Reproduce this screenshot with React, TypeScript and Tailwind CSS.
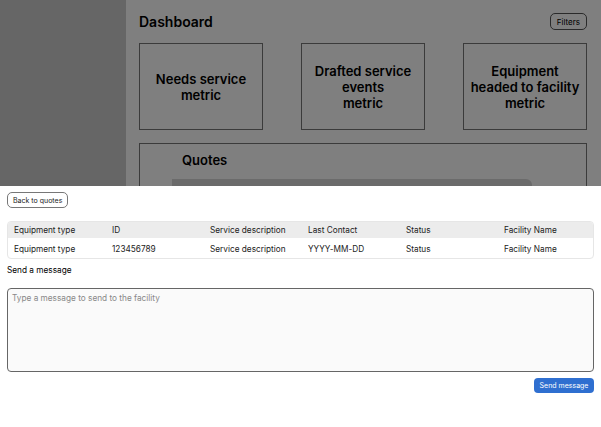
import React from 'react'

const cols = ['Equipment type', 'ID', 'Service description', 'Last Contact', 'Status', 'Facility Name']
const row = ['Equipment type', '123456789', 'Service description', 'YYYY-MM-DD', 'Status', 'Facility Name']

function Metric({ lines }: { lines: string[] }) {
  return (
    <div className="w-[124px] h-[87px] border border-[#777] flex flex-col items-center justify-center text-[13px] leading-[16px] font-semibold text-center text-black">
      {lines.map(l => <div key={l}>{l}</div>)}
    </div>
  )
}

export default function App() {
  return (
    <div className="relative w-[601px] h-[427px] overflow-hidden bg-white" style={{ fontFamily: 'Inter, "Noto Sans", sans-serif' }}>
      {/* dashboard behind */}
      <div className="flex h-full">
        <div className="w-[126px] bg-[#cccccc]" />
        <div className="flex-1 pl-[13px] pr-[14px] pt-[13px]">
          <div className="flex items-center justify-between h-[17px]">
            <div className="text-[14px] font-semibold text-black">Dashboard</div>
            <button className="h-[17px] px-[6px] border border-[#555] rounded-[5px] text-[8px] text-black">Filters</button>
          </div>
          <div className="flex justify-between mt-[13px]">
            <Metric lines={['Needs service', 'metric']} />
            <Metric lines={['Drafted service', 'events', 'metric']} />
            <Metric lines={['Equipment', 'headed to facility', 'metric']} />
          </div>
          <div className="mt-[13px] border border-[#777] h-[200px] pl-[32px] pt-[8px]">
            <div className="pl-[10px] text-[13px] font-semibold text-black leading-[16px]">Quotes</div>
            <div className="mt-[11px] w-[360px] h-[60px] bg-[#d6d6d6] rounded-tr-[6px]" />
          </div>
        </div>
      </div>
      <div className="absolute inset-0 bg-black/50" />

      {/* bottom sheet */}
      <div className="absolute left-0 right-0 bottom-0 h-[241px] bg-white px-[7px] pt-[6px] flex flex-col">
        <button className="self-start h-[16px] px-[5px] border border-[#777] rounded-[5px] text-[7px] text-[#222] leading-none">Back to quotes</button>
        <div className="mt-[13px] border border-[#e6e6e6] rounded-[4px] overflow-hidden text-[8.25px] text-[#222]">
          <div className="grid grid-cols-[repeat(6,98px)] bg-[#ececec] h-[16px] items-center pl-[6px]">
            {cols.map(c => <div key={c}>{c}</div>)}
          </div>
          <div className="grid grid-cols-[repeat(6,98px)] h-[20px] items-center pl-[6px] pt-[3px]">
            {row.map((c, i) => <div key={i}>{c}</div>)}
          </div>
        </div>
        <div className="mt-[5px] text-[8.25px] text-black leading-[12px]">Send a message</div>
        <textarea
          className="mt-[12px] block w-full h-[84px] border border-[#666] rounded-[4px] bg-[#fafafa] px-[4px] py-[3px] text-[8.25px] resize-none placeholder:text-[#888] outline-none"
          placeholder="Type a message to send to the facility"
        />
        <div className="flex justify-end mt-[6px]">
          <button className="h-[15px] w-[60px] bg-[#2f6fd0] rounded-[4px] text-white text-[7px] leading-none">Send message</button>
        </div>
      </div>
    </div>
  )
}
